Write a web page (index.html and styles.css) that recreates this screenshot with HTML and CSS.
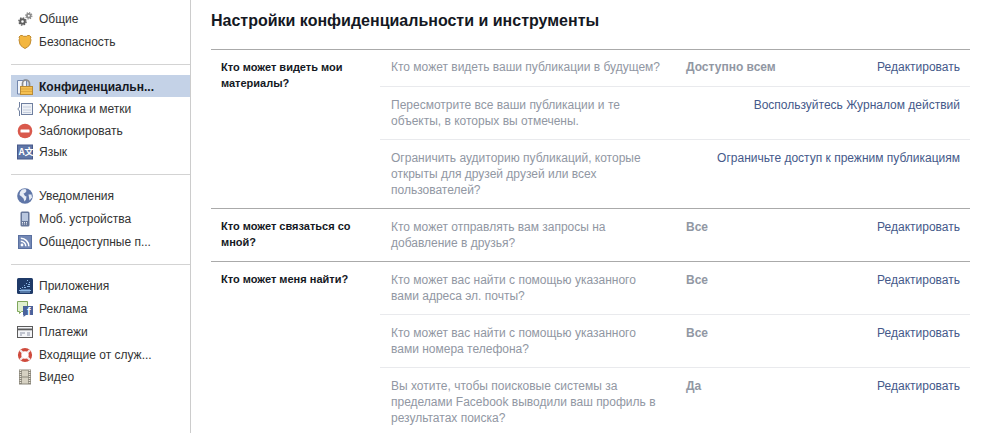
FILE: index.html
```html
<!DOCTYPE html>
<html lang="ru">
<head>
<meta charset="utf-8">
<title>Настройки</title>
<link rel="stylesheet" href="styles.css">
</head>
<body>
<div class="page">
<nav class="side">
  <ul class="group g1">
    <li class="item"><svg class="ic" viewBox="0 0 16 16"><g fill="none" stroke="#5f5f5f"><circle cx="5.500" cy="10.500" r="2.300" stroke-width="2"/><circle cx="5.500" cy="10.500" r="3.600" stroke-width="1.400" stroke-dasharray="1.500 1.300"/></g><g fill="none" stroke="#8b8b8b"><circle cx="11.800" cy="4.800" r="1.900" stroke-width="1.700"/><circle cx="11.800" cy="4.800" r="3.100" stroke-width="1.200" stroke-dasharray="1.300 1.100"/></g></svg><span>Общие</span></li>
    <li class="item"><svg class="ic" viewBox="0 0 16 16"><path d="M3.500 1.500h2l1 .8h3l1-.8h2l1.500 1.500-.5 1.500.5 1.500-.5 2c0 3-2 4.500-5.500 6.500-3.500-2-5.500-3.500-5.500-6.500l-.5-2 .5-1.500-.5-1.500z" fill="#f3b63f" stroke="#c08a2e"/></svg><span>Безопасность</span></li>
  </ul>
  <ul class="group g2">
    <li class="item sel"><svg class="ic" viewBox="0 0 16 16"><path d="M.5 1.500h6v-.5h3v14H.5z" fill="#f2f5fa" stroke="#7286ad"/><path d="M5.500 8V4.500a3.500 3.500 0 0 1 7 0V8" fill="none" stroke="#8c8c8c" stroke-width="1.700"/><rect x="3.500" y="7.500" width="12" height="8" fill="#f4c052" stroke="#b98a35"/><path d="M4 10h11M4 12.500h11" stroke="#dfa73c"/></svg><span>Конфиденциальн...</span></li>
    <li class="item"><svg class="ic" viewBox="0 0 16 16"><rect x="4.500" y="2.500" width="11" height="11" fill="#eef1f6" stroke="#6f7f9f"/><path d="M6 6h8M6 9h8M6 11.500h8" stroke="#c3ccdc"/><path d="M2.500 1v5L.8 8l1.700 2v5" fill="none" stroke="#6f7f9f"/></svg><span>Хроника и метки</span></li>
    <li class="item"><svg class="ic" viewBox="0 0 16 16"><circle cx="8" cy="8" r="7.300" fill="#d9594c"/><rect x="3.500" y="6.500" width="9" height="3" rx=".5" fill="#fff"/></svg><span>Заблокировать</span></li>
    <li class="item"><svg class="ic" viewBox="0 0 16 16"><rect x=".5" y="1" width="15" height="14" fill="#5f76a8" stroke="#47598a"/><text x="1.700" y="11" class="gl">A</text><text x="7.500" y="11" class="gl">文</text></svg><span>Язык</span></li>
  </ul>
  <ul class="group g3">
    <li class="item"><svg class="ic" viewBox="0 0 16 16"><circle cx="8" cy="8" r="7.800" fill="#5f76a8"/><path d="M5 1.500 8.500 1l1 2-1.500 2-1.500 .5L8 8l1.500.5-.5 3-1.500 2-1-3-2-2-2-1.500.5-3z" fill="#e6ebf4"/><path d="M11.500 6.500h3l.5 3-2.500 3z" fill="#e6ebf4"/></svg><span>Уведомления</span></li>
    <li class="item"><svg class="ic" viewBox="0 0 16 16"><rect x="3.500" y=".5" width="9" height="15" rx="1.500" fill="#66779a"/><rect x="5" y="2" width="6" height="8" fill="#b9c7df"/><path d="M5 11.500h6M5 13h6" stroke="#e6e9f0" stroke-dasharray="1 1"/></svg><span>Моб. устройства</span></li>
    <li class="item"><svg class="ic" viewBox="0 0 16 16"><rect x="1.500" y="1.500" width="13" height="13" fill="#7388b5" stroke="#5a70a0"/><circle cx="5" cy="11" r="1.400" fill="#fff"/><path d="M3.800 7.300a5 5 0 0 1 5 5M3.800 4.300a8 8 0 0 1 8 8" fill="none" stroke="#fff" stroke-width="1.500"/></svg><span>Общедоступные п...</span></li>
  </ul>
  <ul class="group g4">
    <li class="item"><svg class="ic" viewBox="0 0 16 16"><rect width="16" height="16" rx="1.500" fill="#1f3a68"/><path d="M10 2h1v1h-1zM12 4h1v1h-1zM9 5h1v1H9zM11 6h2v1h-2zM7 7h1v1H7zM5 9h1v1H5zM3 10h1v1H3zM7 9h2v1H7zM10 8h3v1h-3zM2 12h12v1H2zM3 13.500h10v1H3zM4 11h9v.600H4z" fill="#8db8e6"/></svg><span>Приложения</span></li>
    <li class="item"><svg class="ic" viewBox="0 0 16 16"><path d="M.5.500h10v10h-6l-2 2v-2H.5z" fill="#dff0cf" stroke="#7fa65c"/><path d="M6 5h10v9h-7l-2.500 2v-2H6z" fill="#4a639c"/><text x="10" y="14" class="fb">f</text></svg><span>Реклама</span></li>
    <li class="item"><svg class="ic" viewBox="0 0 16 16"><rect x=".5" y="2.500" width="15" height="11" fill="#f4f5f8" stroke="#5c5c5c"/><rect x="1" y="4.500" width="14" height="1.800" fill="#5c5c5c"/><path d="M3 9h5M10 9h3M3 11h2M10 11h3" stroke="#8c93a6"/></svg><span>Платежи</span></li>
    <li class="item"><svg class="ic" viewBox="0 0 16 16"><circle cx="8" cy="8" r="5.400" fill="#fff" stroke="#cf4a3c" stroke-width="3.400"/><path d="M3.200 3.200 5.800 5.800M12.800 3.200 10.200 5.800M3.200 12.800 5.800 10.200M12.800 12.800 10.200 10.200" stroke="#f4eded" stroke-width="2.200"/></svg><span>Входящие от служ...</span></li>
    <li class="item"><svg class="ic" viewBox="0 0 16 16"><rect x="2" y=".5" width="12" height="15" fill="#8c887c"/><rect x="5" y="1.500" width="6" height="6" fill="#d6d1c2"/><rect x="5" y="8.500" width="6" height="6" fill="#d6d1c2"/><path d="M3.500 1v14M12.500 1v14" stroke="#e8e4d8" stroke-width="1.500" stroke-dasharray="1 1"/></svg><span>Видео</span></li>
  </ul>
</nav>
<main class="main">
  <h1 class="title">Настройки конфиденциальности и инструменты</h1>
  <section class="sect">
    <h2 class="head">Кто может видеть мои материалы?</h2>
    <div class="rows">
      <div class="row r37"><p class="q one">Кто может видеть ваши публикации в будущем?</p><b class="val">Доступно всем</b><a class="act">Редактировать</a></div>
      <div class="row"><p class="q">Пересмотрите все ваши публикации и те объекты, в которых вы отмечены.</p><a class="act wide">Воспользуйтесь Журналом действий</a></div>
      <div class="row"><p class="q">Ограничить аудиторию публикаций, которые открыты для друзей друзей или всех пользователей?</p><a class="act wide">Ограничьте доступ к прежним публикациям</a></div>
    </div>
  </section>
  <section class="sect">
    <h2 class="head">Кто может связаться со мной?</h2>
    <div class="rows">
      <div class="row"><p class="q">Кто может отправлять вам запросы на добавление в друзья?</p><b class="val">Все</b><a class="act">Редактировать</a></div>
    </div>
  </section>
  <section class="sect">
    <h2 class="head">Кто может меня найти?</h2>
    <div class="rows">
      <div class="row"><p class="q">Кто может вас найти с помощью указанного вами адреса эл. почты?</p><b class="val">Все</b><a class="act">Редактировать</a></div>
      <div class="row"><p class="q">Кто может вас найти с помощью указанного вами номера телефона?</p><b class="val">Все</b><a class="act">Редактировать</a></div>
      <div class="row"><p class="q">Вы хотите, чтобы поисковые системы за пределами Facebook выводили ваш профиль в результатах поиска?</p><b class="val">Да</b><a class="act">Редактировать</a></div>
    </div>
  </section>
</main>
</div>
</body>
</html>
```
FILE: styles.css
```css
* { box-sizing: border-box; }
html, body { margin: 0; height: 100%; overflow: hidden; background: #fff; }
body { font: 12px/16px "Liberation Sans", Arial, sans-serif; color: #141823; }
.page { display: flex; height: 433px; }
.side { width: 191px; flex: none; padding-left: 11px; border-right: 1px solid #ccc; padding-top: 7px; }
.group { list-style: none; margin: 0; border-top: 1px solid #d3d3d3; }
.g1 { border-top: 0; padding: 0 0 11px; }
.g1 .item { height: 23px; }
.g2 { padding: 10px 0 13px; }
.g2 .item { height: 22px; padding-top: 2px; }
.g2 .item:last-child { height: 20px; }
.g3 { padding: 9px 0 11px; }
.g3 .item { height: 23px; }
.g4 { padding: 10px 0 0; }
.g4 .item { height: 22.75px; }
.item { display: flex; align-items: center; padding-left: 6px; color: #333; }
.item span { margin-left: 6px; }
.ic { width: 16px; height: 16px; flex: none; }
.gl { font: bold 9px "Noto Sans CJK SC", "Liberation Sans", sans-serif; fill: #fff; }
.fb { font: bold 11px "Liberation Sans", sans-serif; fill: #fff; }
.sel { background: #c4d2e7; color: #141823; font-weight: bold; }
.main { width: 779px; padding-left: 20px; }
.title { margin: 0; height: 49px; padding-top: 11px; font-size: 16px; line-height: 20px; font-weight: bold; color: #141823; }
.sect { display: flex; border-top: 1px solid #aaa; }
.head { width: 169px; flex: none; margin: 0; padding: 9px 10px 0; font-size: 11px; line-height: 16px; font-weight: bold; color: #141823; }
.rows { flex: 1; }
.row { display: flex; padding: 10px 10px 10px 11px; border-top: 1px solid #e9eaed; }
.row:first-child { border-top: 0; }
.r37 { height: 36px; padding-top: 9px; }
.q { margin: 0; width: 265px; flex: none; color: #9197a3; }
.one { white-space: nowrap; }
.val { width: 120px; color: #9197a3; flex: none; padding-left: 30px; }
.act { margin-left: auto; color: #45598a; white-space: nowrap; }
```
